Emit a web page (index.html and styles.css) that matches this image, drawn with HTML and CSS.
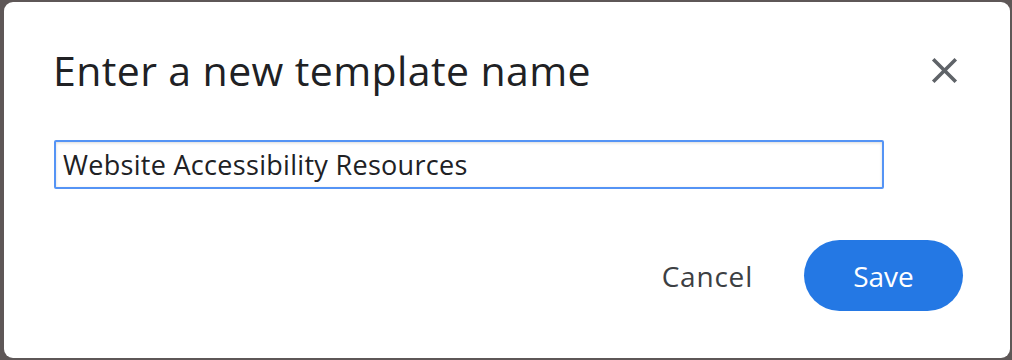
FILE: index.html
```html
<!DOCTYPE html>
<html lang="en">
<head>
    <meta charset="UTF-8">
    <title>Enter a new template name</title>
    <link rel="stylesheet" href="styles.css">
</head>
<body>
    <div class="backdrop">
        <div class="dialog">
            <div class="dialog-header">
                <h1>Enter a new template name</h1>
                <button class="close-button" aria-label="Close">
                    <svg width="43" height="43" viewBox="0 0 24 24"><path d="M19 6.41 17.59 5 12 10.59 6.41 5 5 6.41 10.59 12 5 17.59 6.41 19 12 13.41 17.59 19 19 17.59 13.41 12z" fill="#5f6368"/></svg>
                </button>
            </div>
            <input type="text" class="name-input" value="Website Accessibility Resources">
            <div class="dialog-actions">
                <button class="cancel-button">Cancel</button>
                <button class="save-button">Save</button>
            </div>
        </div>
    </div>
</body>
</html>
```

FILE: styles.css
```css
body {
    margin: 0;
    background-color: #5e5757;
    font-family: "Open Sans", Roboto, sans-serif;
    overflow: hidden;
}
.backdrop {
    padding: 2px 2px 0 4px;
    height: 360px;
    box-sizing: border-box;
}
.dialog {
    background-color: #fff;
    border-radius: 9px;
    height: 356px;
    padding: 0 47px 0 49px;
    box-sizing: border-box;
}
.dialog-header {
    display: flex;
    justify-content: space-between;
    align-items: center;
    padding-top: 42px;
    height: 52px;
}
h1 {
    margin: 0;
    font-size: 41px;
    line-height: 52px;
    font-weight: 400;
    color: #202124;
    letter-spacing: 0.4px;
}
.close-button {
    background: none;
    border: none;
    padding: 0;
    width: 43px;
    height: 43px;
    margin-right: -3px;
    cursor: pointer;
}
.name-input {
    display: block;
    margin-top: 44px;
    margin-left: 1px;
    width: 830px;
    height: 49px;
    box-sizing: border-box;
    border: 2px solid #5594f5;
    border-radius: 2px;
    box-shadow: inset 0 1px 3px rgba(0, 0, 0, 0.15);
    padding: 0 7px;
    font-family: "Open Sans", Roboto, sans-serif;
    font-size: 27px;
    letter-spacing: 0.3px;
    color: #202124;
    outline: none;
}
.dialog-actions {
    display: flex;
    justify-content: flex-end;
    align-items: center;
    gap: 39px;
    margin-top: 51px;
}
.cancel-button {
    background: none;
    border: none;
    font-family: "Open Sans", Roboto, sans-serif;
    font-size: 28px;
    letter-spacing: 0.8px;
    color: #3c4043;
    padding: 0 12px;
    cursor: pointer;
}
.save-button {
    background-color: #2478e4;
    color: #fff;
    border: none;
    border-radius: 36px;
    width: 159px;
    height: 71px;
    font-family: "Open Sans", Roboto, sans-serif;
    font-size: 28px;
    cursor: pointer;
}
```
